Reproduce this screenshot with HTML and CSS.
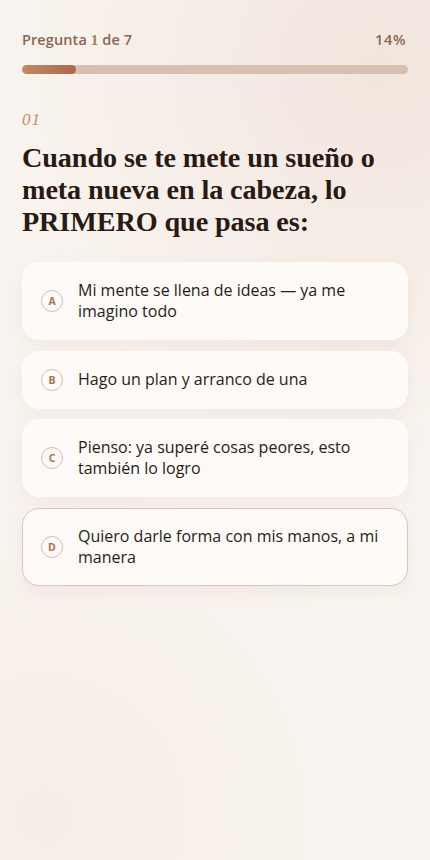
FILE: index.html
```html
<!DOCTYPE html>
<html lang="es">
<head>
<meta charset="utf-8">
<link rel="stylesheet" href="styles.css">
</head>
<body>
<main class="quiz">
  <header class="progress-head">
    <span class="step">Pregunta <span class="num">1</span> de 7</span>
    <span class="pct">14%</span>
  </header>
  <div class="track"><div class="fill" style="width:14%"></div></div>
  <div class="qnum">01</div>
  <h1 class="question">Cuando se te mete un sueño o meta nueva en la cabeza, lo PRIMERO que pasa es:</h1>
  <div class="options">
    <button class="option"><span class="badge">A</span><span class="label">Mi mente se llena de ideas — ya me imagino todo</span></button>
    <button class="option"><span class="badge">B</span><span class="label">Hago un plan y arranco de una</span></button>
    <button class="option"><span class="badge">C</span><span class="label">Pienso: ya superé cosas peores, esto también lo logro</span></button>
    <button class="option outlined"><span class="badge">D</span><span class="label">Quiero darle forma con mis manos, a mi manera</span></button>
  </div>
</main>
</body>
</html>
```
FILE: styles.css
```css
* { box-sizing: border-box; }
html, body { margin: 0; height: 100%; }
body {
  width: 430px;
  min-height: 860px;
  font-family: "Open Sans", "Liberation Sans", sans-serif;
  background:
    radial-gradient(circle at 88% 8%, #f2e6de 0%, rgba(242,230,222,0) 45%),
    radial-gradient(circle at 10% 95%, #f5ede7 0%, rgba(245,237,231,0) 40%),
    #f9f4f0;
  color: #2e1f1a;
}
.quiz { padding: 30px 22px 40px; }
.progress-head {
  display: flex;
  justify-content: space-between;
  align-items: baseline;
  color: #8b6553;
  font-weight: 600;
  font-size: 14.5px;
  letter-spacing: 0.1px;
}
.progress-head .pct { padding-right: 2px; letter-spacing: 0.6px; }
.num {
  font-family: "Liberation Serif", serif;
  font-weight: 700;
  color: #b0784f;
  font-size: 15px;
}
.track {
  margin-top: 16px;
  height: 9px;
  border-radius: 5px;
  background: #d6c0b3;
  overflow: hidden;
}
.fill {
  height: 100%;
  border-radius: 5px;
  background: linear-gradient(90deg, #c48a64, #a9694a);
}
.qnum {
  margin-top: 36px;
  font-family: "Liberation Serif", serif;
  font-style: italic;
  font-size: 17px;
  color: #c0906c;
  letter-spacing: 1px;
}
.question {
  margin: 12px 0 0;
  font-family: "Liberation Serif", serif;
  font-weight: 700;
  font-size: 28.2px;
  line-height: 32px;
  color: #2a1a14;
  letter-spacing: -0.1px;
}
.options {
  margin-top: 24px;
  display: flex;
  flex-direction: column;
  gap: 10.5px;
}
.option {
  display: flex;
  align-items: center;
  gap: 15px;
  width: 100%;
  padding: 17px 18px 17px 18px;
  border: 1px solid transparent;
  border-radius: 17px;
  background: #fdfaf8;
  box-shadow: 0 6px 18px rgba(150, 110, 90, 0.08);
  text-align: left;
  font-family: inherit;
  color: #2a1c17;
  cursor: pointer;
}
.option.outlined { border-color: #dcc4b6; }
.badge {
  flex: none;
  width: 22px;
  height: 22px;
  border: 1px solid #dbbca9;
  border-radius: 50%;
  display: flex;
  align-items: center;
  justify-content: center;
  font-size: 10.5px;
  font-weight: 700;
  color: #a8704d;
}
.label {
  font-size: 16px;
  line-height: 21px;
}
```
